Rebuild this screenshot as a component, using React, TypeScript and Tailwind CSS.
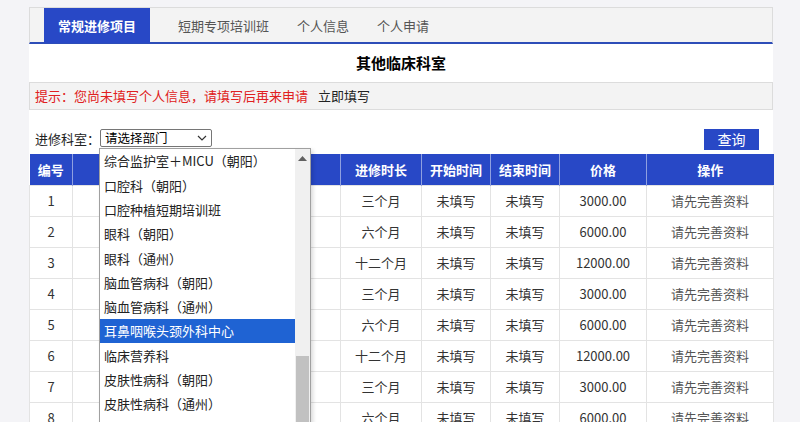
import React from "react";

const rows = [
  { n: 1, dur: "三个月", price: "3000.00" },
  { n: 2, dur: "六个月", price: "6000.00" },
  { n: 3, dur: "十二个月", price: "12000.00" },
  { n: 4, dur: "三个月", price: "3000.00" },
  { n: 5, dur: "六个月", price: "6000.00" },
  { n: 6, dur: "十二个月", price: "12000.00" },
  { n: 7, dur: "三个月", price: "3000.00" },
  { n: 8, dur: "六个月", price: "6000.00" },
];

const options = [
  "综合监护室＋MICU（朝阳）",
  "口腔科（朝阳）",
  "口腔种植短期培训班",
  "眼科（朝阳）",
  "眼科（通州）",
  "脑血管病科（朝阳）",
  "脑血管病科（通州）",
  "耳鼻咽喉头颈外科中心",
  "临床营养科",
  "皮肤性病科（朝阳）",
  "皮肤性病科（通州）",
  "普通外科（胃肠外科）（朝阳）",
];

export default function App() {
  return (
    <div className="min-h-[422px] bg-[#f4f4f7] pt-[7px] font-['Noto_Sans_CJK_SC','Microsoft_YaHei',sans-serif] text-[13px] text-[#333]">
      <div className="relative ml-[29px] w-[744px] bg-white pb-[40px]">
        {/* Tabs */}
        <div className="flex h-[37px] border-x border-t border-[#dcdcdc] border-b-2 border-b-[#2d4db8] bg-[#f3f3f3] pl-[14px]">
          <div className="mr-[14px] flex h-[35px] items-center bg-[#2848c6] px-[14px] font-bold text-white">常规进修项目</div>
          <div className="flex h-[35px] items-center px-[14px] text-[#555]">短期专项培训班</div>
          <div className="flex h-[35px] items-center px-[14px] text-[#555]">个人信息</div>
          <div className="flex h-[35px] items-center px-[14px] text-[#555]">个人申请</div>
        </div>
        {/* Title */}
        <div className="flex h-[38px] items-center justify-center text-[15px] font-bold text-black">其他临床科室</div>
        {/* Notice */}
        <div className="flex h-[28px] items-center border border-[#dcdcdc] bg-[#f3f3f3] px-[5px]">
          <span className="text-[#e02020]">提示：您尚未填写个人信息，请填写后再来申请</span>
          <span className="ml-[10px] text-[#222]">立即填写</span>
        </div>
        {/* Filter */}
        <div className="flex h-[44px] items-end justify-between pb-[4px] pl-[6px] pr-[14px]">
          <div className="mb-[2px] flex items-center">
            <span className="text-[#222]">进修科室：</span>
            <div className="flex h-[18px] w-[112px] items-center justify-between rounded-[2px] border border-[#767676] pl-[4px] pr-[4px] text-[12.5px] leading-none text-black">
              <span>请选择部门</span>
              <svg width="10" height="6" viewBox="0 0 10 6" fill="none" stroke="#333" strokeWidth="1.2">
                <path d="M1 1l4 4 4-4" />
              </svg>
            </div>
          </div>
          <div className="flex h-[21px] w-[55px] items-center justify-center bg-[#2848c6] text-[14px] text-white">查询</div>
        </div>
        {/* Table */}
        <table className="w-[744px] table-fixed border-collapse">
          <colgroup>
            <col className="w-[43px]" />
            <col className="w-[268px]" />
            <col className="w-[81px]" />
            <col className="w-[69px]" />
            <col className="w-[69px]" />
            <col className="w-[87px]" />
            <col className="w-[127px]" />
          </colgroup>
          <thead>
            <tr className="h-[31px] bg-[#2848c6] font-bold text-white">
              {["编号", "进修科室", "进修时长", "开始时间", "结束时间", "价格", "操作"].map((h) => (
                <th key={h} className="border-x border-[#8fa0e0] p-0 text-center font-bold first:border-l-0 last:border-r-0">
                  {h}
                </th>
              ))}
            </tr>
          </thead>
          <tbody>
            {rows.map((r) => (
              <tr key={r.n} className="h-[31px]">
                <td className="border border-[#e3e3e3] p-0 text-center">{r.n}</td>
                <td className="border border-[#e3e3e3] p-0 text-center">其他临床科室</td>
                <td className="border border-[#e3e3e3] p-0 text-center">{r.dur}</td>
                <td className="border border-[#e3e3e3] p-0 text-center">未填写</td>
                <td className="border border-[#e3e3e3] p-0 text-center">未填写</td>
                <td className="border border-[#e3e3e3] p-0 text-center">{r.price}</td>
                <td className="border border-[#e3e3e3] p-0 text-center text-[#555]">请先完善资料</td>
              </tr>
            ))}
          </tbody>
        </table>

        {/* Open select dropdown */}
        <div className="absolute left-[70px] top-[141px] flex h-[300px] w-[212px] overflow-hidden border border-[#a0a0a0] bg-white shadow-[2px_2px_4px_rgba(0,0,0,0.15)]">
          <div className="flex-1 overflow-hidden">
            {options.map((o, i) => (
              <div
                key={o}
                className={
                  i === 7
                    ? "flex h-[24.3px] items-center bg-[#1f63d3] pl-[4px] text-[13px] text-white"
                    : "flex h-[24.3px] items-center pl-[4px] text-[13px] text-[#222]"
                }
              >
                {o}
              </div>
            ))}
          </div>
          <div className="relative w-[15px] bg-[#f0f0f0]">
            <svg className="absolute left-[3px] top-[7px]" width="9" height="5" viewBox="0 0 9 5">
              <path d="M0 5L4.5 0 9 5z" fill="#606060" />
            </svg>
            <div className="absolute left-[1px] right-[1px] top-[207px] h-[120px] bg-[#c1c1c1]" />
          </div>
        </div>
      </div>
    </div>
  );
}
